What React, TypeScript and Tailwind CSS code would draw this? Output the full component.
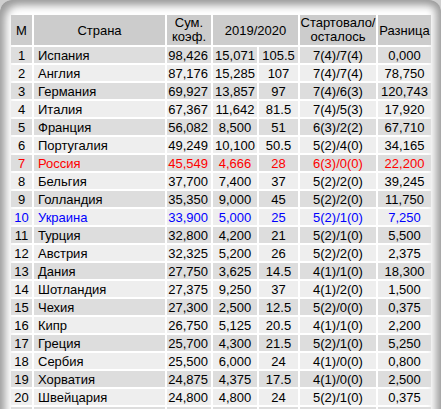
import React from "react";

type Row = {
  n: number;
  name: string;
  sum: string;
  coef: string;
  pts: string;
  start: string;
  diff: string;
  tone?: "red" | "blue";
};

const rows: Row[] = [
  { n: 1, name: "Испания", sum: "98,426", coef: "15,071", pts: "105.5", start: "7(4)/7(4)", diff: "0,000" },
  { n: 2, name: "Англия", sum: "87,176", coef: "15,285", pts: "107", start: "7(4)/7(4)", diff: "78,750" },
  { n: 3, name: "Германия", sum: "69,927", coef: "13,857", pts: "97", start: "7(4)/6(3)", diff: "120,743" },
  { n: 4, name: "Италия", sum: "67,367", coef: "11,642", pts: "81.5", start: "7(4)/5(3)", diff: "17,920" },
  { n: 5, name: "Франция", sum: "56,082", coef: "8,500", pts: "51", start: "6(3)/2(2)", diff: "67,710" },
  { n: 6, name: "Португалия", sum: "49,249", coef: "10,100", pts: "50.5", start: "5(2)/4(0)", diff: "34,165" },
  { n: 7, name: "Россия", sum: "45,549", coef: "4,666", pts: "28", start: "6(3)/0(0)", diff: "22,200", tone: "red" },
  { n: 8, name: "Бельгия", sum: "37,700", coef: "7,400", pts: "37", start: "5(2)/2(0)", diff: "39,245" },
  { n: 9, name: "Голландия", sum: "35,350", coef: "9,000", pts: "45", start: "5(2)/2(0)", diff: "11,750" },
  { n: 10, name: "Украина", sum: "33,900", coef: "5,000", pts: "25", start: "5(2)/1(0)", diff: "7,250", tone: "blue" },
  { n: 11, name: "Турция", sum: "32,800", coef: "4,200", pts: "21", start: "5(2)/1(0)", diff: "5,500" },
  { n: 12, name: "Австрия", sum: "32,325", coef: "5,200", pts: "26", start: "5(2)/2(0)", diff: "2,375" },
  { n: 13, name: "Дания", sum: "27,750", coef: "3,625", pts: "14.5", start: "4(1)/1(0)", diff: "18,300" },
  { n: 14, name: "Шотландия", sum: "27,375", coef: "9,250", pts: "37", start: "4(1)/2(0)", diff: "1,500" },
  { n: 15, name: "Чехия", sum: "27,300", coef: "2,500", pts: "12.5", start: "5(2)/0(0)", diff: "0,375" },
  { n: 16, name: "Кипр", sum: "26,750", coef: "5,125", pts: "20.5", start: "4(1)/1(0)", diff: "2,200" },
  { n: 17, name: "Греция", sum: "25,700", coef: "4,300", pts: "21.5", start: "5(2)/1(0)", diff: "5,250" },
  { n: 18, name: "Сербия", sum: "25,500", coef: "6,000", pts: "24", start: "4(1)/0(0)", diff: "0,800" },
  { n: 19, name: "Хорватия", sum: "24,875", coef: "4,375", pts: "17.5", start: "4(1)/0(0)", diff: "2,500" },
  { n: 20, name: "Швейцария", sum: "24,800", coef: "4,800", pts: "24", start: "5(2)/1(0)", diff: "0,375" },
];

const toneClass = (tone?: "red" | "blue") =>
  tone === "red" ? "text-[#ff0000]" : tone === "blue" ? "text-[#0000ff]" : "text-black";

export default function App() {
  return (
    <div className="w-[441px] h-[409px] overflow-hidden bg-[#cfcfcf] font-['Liberation_Sans',Arial,sans-serif] text-[13px]">
      <div className="h-[430px] rounded-t-[12px] bg-white pl-[9px] pt-[13px] shadow-[inset_7px_7px_8px_-2px_#9c9c9c,inset_-7px_0_8px_-2px_#9c9c9c]">
        <table className="table-fixed border-separate border-spacing-[2px] leading-[15px]">
          <colgroup>
            <col className="w-[21px]" />
            <col className="w-[131px]" />
            <col className="w-[44px]" />
            <col className="w-[44px]" />
            <col className="w-[39px]" />
            <col className="w-[76px]" />
            <col className="w-[53px]" />
          </colgroup>
          <thead>
            <tr className="h-[30px] bg-[#cccccc] text-center">
              <th className="font-normal">М</th>
              <th className="font-normal">Страна</th>
              <th className="font-normal leading-[14px]">
                Сум.
                <br />
                коэф.
              </th>
              <th colSpan={2} className="font-normal">
                2019/2020
              </th>
              <th className="font-normal leading-[14px]">
                Стартовало/
                <br />
                осталось
              </th>
              <th className="font-normal">Разница</th>
            </tr>
          </thead>
          <tbody>
            {rows.map((r) => (
              <tr
                key={r.n}
                className={`h-[16px] ${r.n % 2 === 1 ? "bg-[#dddddd]" : "bg-[#eeeeee]"} ${toneClass(r.tone)}`}
              >
                <td className="p-0 text-center">{r.n}</td>
                <td className="p-0 pl-[4px] whitespace-nowrap">{r.name}</td>
                <td className="p-0 pr-[3px] text-right">{r.sum}</td>
                <td className="p-0 text-center">{r.coef}</td>
                <td className="p-0 text-center">{r.pts}</td>
                <td className="p-0 text-center">{r.start}</td>
                <td className="p-0 text-center">{r.diff}</td>
              </tr>
            ))}
            {/* next row is cut off by the viewport, only its background shows */}
            <tr className="h-[16px] bg-[#dddddd]">
              <td className="p-0" />
              <td className="p-0" />
              <td className="p-0" />
              <td className="p-0" />
              <td className="p-0" />
              <td className="p-0" />
              <td className="p-0" />
            </tr>
          </tbody>
        </table>
      </div>
    </div>
  );
}
